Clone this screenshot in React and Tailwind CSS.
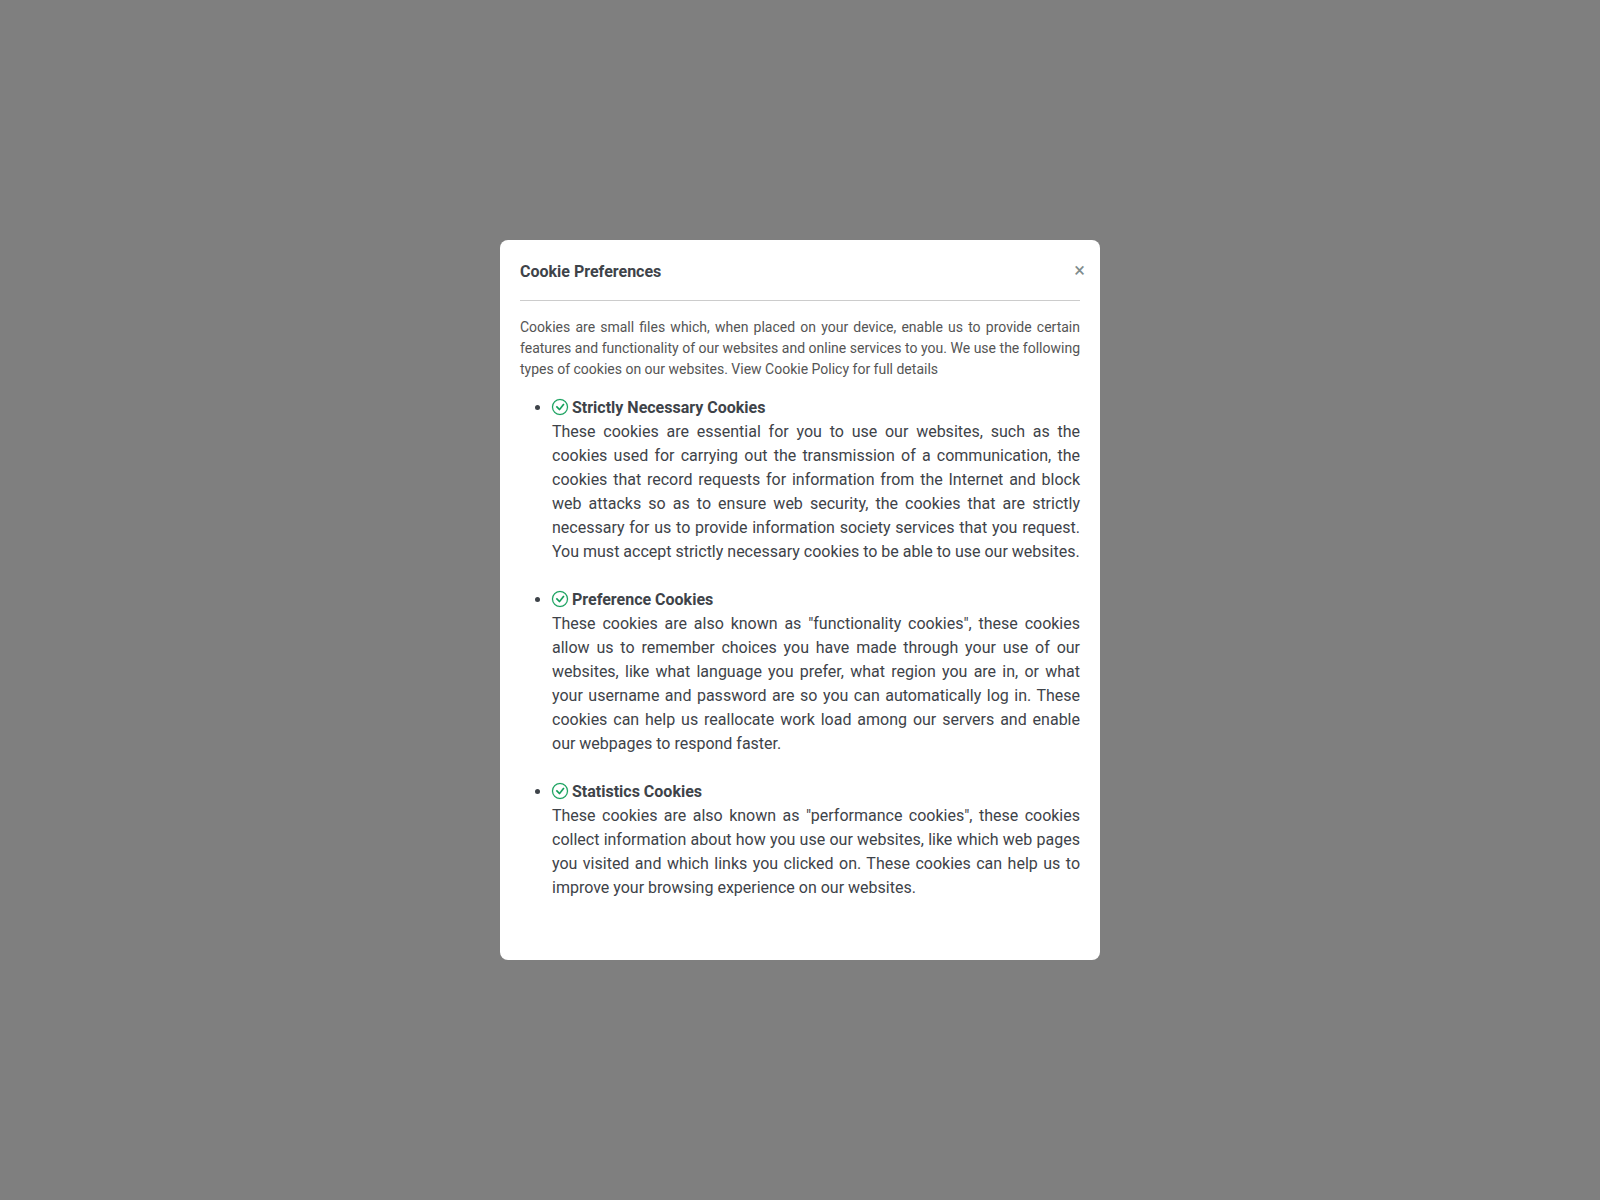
import React, { useState } from "react";

const cookieTypes = [
  {
    title: "Strictly Necessary Cookies",
    text:
      "These cookies are essential for you to use our websites, such as the cookies used for carrying out the transmission of a communication, the cookies that record requests for information from the Internet and block web attacks so as to ensure web security, the cookies that are strictly necessary for us to provide information society services that you request. You must accept strictly necessary cookies to be able to use our websites."
  },
  {
    title: "Preference Cookies",
    text:
      'These cookies are also known as "functionality cookies", these cookies allow us to remember choices you have made through your use of our websites, like what language you prefer, what region you are in, or what your username and password are so you can automatically log in. These cookies can help us reallocate work load among our servers and enable our webpages to respond faster.'
  },
  {
    title: "Statistics Cookies",
    text:
      'These cookies are also known as "performance cookies", these cookies collect information about how you use our websites, like which web pages you visited and which links you clicked on. These cookies can help us to improve your browsing experience on our websites.'
  }
];

const CheckIcon = () =>
  <svg
    className="inline-block w-4 h-4 align-[-2px] text-[#0f9d58] overflow-visible"
    viewBox="0 0 16 16"
    fill="currentColor"
    stroke="currentColor"
    strokeWidth="0.2"
    aria-hidden="true"
  >
    <path d="M8 15A7 7 0 1 1 8 1a7 7 0 0 1 0 14m0 1A8 8 0 1 0 8 0a8 8 0 0 0 0 16" />
    <path d="m10.97 4.97-.02.022-3.473 4.425-2.093-2.094a.75.75 0 0 0-1.06 1.06L6.97 11.03a.75.75 0 0 0 1.079-.02l3.992-4.99a.75.75 0 0 0-1.071-1.05" />
  </svg>;

const App = () => {
  const [open, setOpen] = useState(true);

  return (
    <div className="min-h-screen flex items-center justify-center bg-[#7f7f7f] font-['Roboto',sans-serif] text-base text-[#3e4349]">
      {open &&
        <div
          role="dialog"
          aria-labelledby="cookie-title"
          className="relative w-full max-w-[600px] bg-white rounded-lg p-5 pb-[60px]"
        >
          <button
            onClick={() => setOpen(false)}
            aria-label="Close"
            className="absolute top-5 right-[15px] leading-5 text-xl text-[#7f8c8d] cursor-pointer"
          >
            ×
          </button>

          <h2 id="cookie-title" className="font-bold leading-6 pb-4">
            Cookie Preferences
          </h2>
          <hr className="border-[#cccccc]" />

          <p className="mt-4 mb-4 text-sm leading-[21px] text-justify text-[#555555]">
            Cookies are small files which, when placed on your device, enable
            us to provide certain features and functionality of our websites
            and online services to you. We use the following types of cookies
            on our websites. View Cookie Policy for full details
          </p>

          <ul className="list-disc pl-8 space-y-6 text-justify leading-6">
            {cookieTypes.map(({ title, text }) =>
              <li key={title}>
                <CheckIcon /> <strong>{title}</strong>
                <p>{text}</p>
              </li>
            )}
          </ul>
        </div>}
    </div>
  );
};

export default App;
